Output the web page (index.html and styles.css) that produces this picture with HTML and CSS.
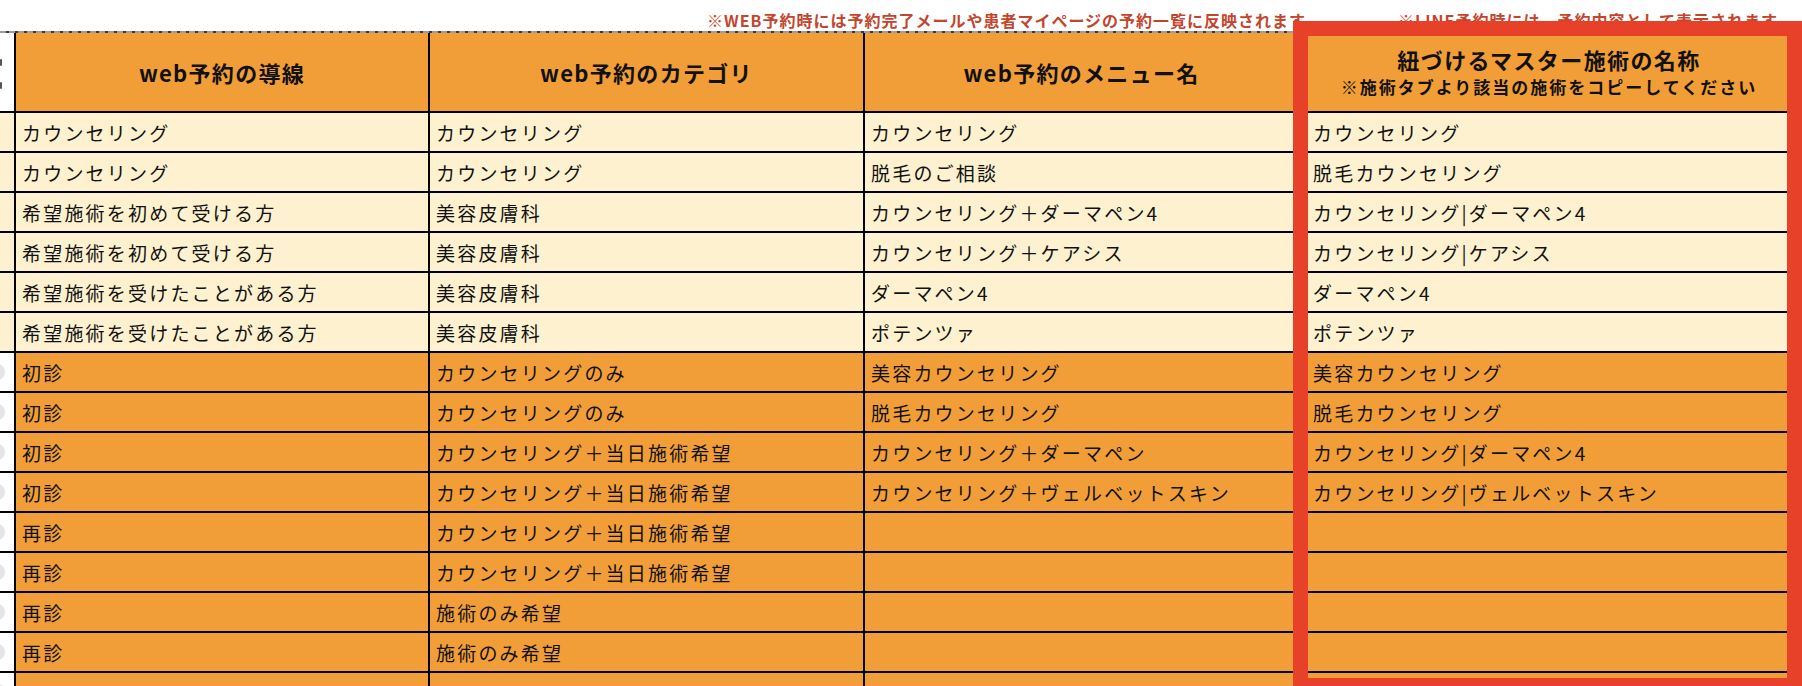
FILE: index.html
```html
<!DOCTYPE html>
<html lang="ja">
<head>
<meta charset="utf-8">
<title>web予約 連携設定</title>
<link rel="stylesheet" href="styles.css">
</head>
<body>
<div class="page">
  <div class="notes">
    <span class="note note-web">※WEB予約時には予約完了メールや患者マイページの予約一覧に反映されます</span>
    <span class="note note-line">※LINE予約時には、予約内容として表示されます</span>
  </div>
  <div class="dash"></div>
  <div class="sheet">
    <div class="row head">
      <div class="c side"><span class="frags"><i class="mark"></i><i class="mark"></i></span></div>
      <div class="c">web予約の導線</div>
      <div class="c">web予約のカテゴリ</div>
      <div class="c">web予約のメニュー名</div>
      <div class="c two"><span class="l1">紐づけるマスター施術の名称</span><span class="l2">※施術タブより該当の施術をコピーしてください</span></div>
      <div class="c"></div>
    </div>
    <div class="row cream">
      <div class="c side"></div><div class="c">カウンセリング</div><div class="c">カウンセリング</div><div class="c">カウンセリング</div><div class="c m">カウンセリング</div><div class="c"></div>
    </div>
    <div class="row cream">
      <div class="c side"></div><div class="c">カウンセリング</div><div class="c">カウンセリング</div><div class="c">脱毛のご相談</div><div class="c m">脱毛カウンセリング</div><div class="c"></div>
    </div>
    <div class="row cream">
      <div class="c side"></div><div class="c">希望施術を初めて受ける方</div><div class="c">美容皮膚科</div><div class="c">カウンセリング＋ダーマペン4</div><div class="c m">カウンセリング|ダーマペン4</div><div class="c"></div>
    </div>
    <div class="row cream">
      <div class="c side"></div><div class="c">希望施術を初めて受ける方</div><div class="c">美容皮膚科</div><div class="c">カウンセリング＋ケアシス</div><div class="c m">カウンセリング|ケアシス</div><div class="c"></div>
    </div>
    <div class="row cream">
      <div class="c side"></div><div class="c">希望施術を受けたことがある方</div><div class="c">美容皮膚科</div><div class="c">ダーマペン4</div><div class="c m">ダーマペン4</div><div class="c"></div>
    </div>
    <div class="row cream">
      <div class="c side"></div><div class="c">希望施術を受けたことがある方</div><div class="c">美容皮膚科</div><div class="c">ポテンツァ</div><div class="c m">ポテンツァ</div><div class="c"></div>
    </div>
    <div class="row orange">
      <div class="c side"><span class="dot"></span></div><div class="c">初診</div><div class="c">カウンセリングのみ</div><div class="c">美容カウンセリング</div><div class="c m">美容カウンセリング</div><div class="c"></div>
    </div>
    <div class="row orange">
      <div class="c side"><span class="dot"></span></div><div class="c">初診</div><div class="c">カウンセリングのみ</div><div class="c">脱毛カウンセリング</div><div class="c m">脱毛カウンセリング</div><div class="c"></div>
    </div>
    <div class="row orange">
      <div class="c side"><span class="dot"></span></div><div class="c">初診</div><div class="c">カウンセリング＋当日施術希望</div><div class="c">カウンセリング＋ダーマペン</div><div class="c m">カウンセリング|ダーマペン4</div><div class="c"></div>
    </div>
    <div class="row orange">
      <div class="c side"><span class="dot"></span></div><div class="c">初診</div><div class="c">カウンセリング＋当日施術希望</div><div class="c">カウンセリング＋ヴェルベットスキン</div><div class="c m">カウンセリング|ヴェルベットスキン</div><div class="c"></div>
    </div>
    <div class="row orange">
      <div class="c side"><span class="dot"></span></div><div class="c">再診</div><div class="c">カウンセリング＋当日施術希望</div><div class="c"></div><div class="c m"></div><div class="c"></div>
    </div>
    <div class="row orange">
      <div class="c side"><span class="dot"></span></div><div class="c">再診</div><div class="c">カウンセリング＋当日施術希望</div><div class="c"></div><div class="c m"></div><div class="c"></div>
    </div>
    <div class="row orange">
      <div class="c side"><span class="dot"></span></div><div class="c">再診</div><div class="c">施術のみ希望</div><div class="c"></div><div class="c m"></div><div class="c"></div>
    </div>
    <div class="row orange">
      <div class="c side"><span class="dot"></span></div><div class="c">再診</div><div class="c">施術のみ希望</div><div class="c"></div><div class="c m"></div><div class="c"></div>
    </div>
    <div class="row orange">
      <div class="c side"><span class="dot"></span></div><div class="c"></div><div class="c"></div><div class="c"></div><div class="c m"></div><div class="c"></div>
    </div>
  </div>
  <div class="highlight"></div>
</div>
</body>
</html>
```

FILE: styles.css
```css
html, body {
  margin: 0;
  padding: 0;
  background: #ffffff;
}

body {
  width: 1802px;
  height: 686px;
  overflow: hidden;
  font-family: "Noto Sans CJK JP", "Noto Sans", sans-serif;
  color: #111111;
}

.page {
  position: relative;
  width: 1802px;
  height: 686px;
  overflow: hidden;
}

.notes {
  height: 31px;
  display: flex;
  align-items: flex-end;
  white-space: nowrap;
}

.note {
  font-size: 16px;
  font-weight: 700;
  letter-spacing: 1px;
  color: #c2452d;
  line-height: 20px;
  padding-bottom: 1px;
}

.note-web {
  margin-left: 707px;
}

.note-line {
  margin-left: 92px;
}

.dash {
  height: 2px;
  background: repeating-linear-gradient(90deg, #9c9c9c 0 6px, #3a3a3a 6px 9px);
}

.sheet {
  display: grid;
  grid-template-columns: 14px 412px 433px 433px 498px 120px;
  grid-template-rows: 78px;
  grid-auto-rows: 38px;
  gap: 2px;
  background: #000000;
  width: 2020px;
}

.row {
  display: contents;
}

.c {
  display: flex;
  align-items: center;
  padding: 0 6px;
  font-size: 19px;
  letter-spacing: 2.2px;
  white-space: nowrap;
  overflow: hidden;
  min-width: 0;
}

.c.m {
  padding-left: 13px;
}

.head .c {
  background: #f19e38;
  justify-content: center;
  font-weight: 700;
  font-size: 22px;
  letter-spacing: 1.3px;
}

.cream .c {
  background: #fdf1cf;
}

.orange .c {
  background: #f19e38;
}

.c.side {
  padding: 0;
  justify-content: flex-start;
}

.head .c.side,
.orange .c.side {
  background: #ffffff;
}

.frags {
  display: flex;
  flex-direction: column;
  gap: 16px;
  margin-top: 4px;
}

.mark {
  display: block;
  width: 2px;
  height: 7px;
  background: #555555;
  border-radius: 1px;
}

.dot {
  flex: none;
  width: 16px;
  height: 16px;
  border-radius: 50%;
  background: #e4e4ea;
  margin-left: -11px;
}

.c.two {
  flex-direction: column;
  justify-content: center;
  line-height: 27px;
  padding-top: 2px;
}

.l1 {
  font-size: 22px;
  letter-spacing: 1.4px;
}

.l2 {
  font-size: 17px;
  letter-spacing: 2px;
}

.highlight {
  position: absolute;
  left: 1293px;
  top: 21px;
  width: 509px;
  height: 672px;
  box-sizing: border-box;
  border: 15px solid #e8412a;
  pointer-events: none;
}
```
